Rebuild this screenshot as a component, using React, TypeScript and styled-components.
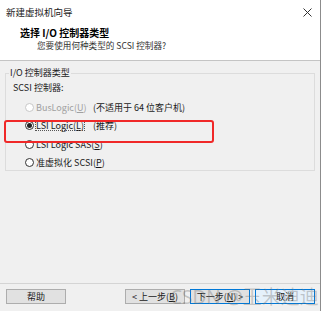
import styled, { createGlobalStyle } from 'styled-components'

const GlobalStyle = createGlobalStyle`
  html, body {
    margin: 0;
    padding: 0;
    background: #ffffff;
  }
  body {
    font-family: "Noto Sans CJK SC", "Noto Sans", sans-serif;
    font-size: 9px;
    color: #1a1a1a;
  }
`

const options = [
  { label: 'BusLogic', key: 'U', note: '(不适用于 64 位客户机)', disabled: true },
  { label: 'LSI Logic', key: 'L', note: '(推荐)', checked: true },
  { label: 'LSI Logic SAS', key: 'S' },
  { label: '准虚拟化 SCSI', key: 'P' },
]

export default function App() {
  return (
    <>
      <GlobalStyle />
      <Window>
        <TitleBar>
          <span>新建虚拟机向导</span>
          <svg width="9" height="9" viewBox="0 0 9 9">
            <path d="M0.5 0.5 L8.5 8.5 M8.5 0.5 L0.5 8.5" stroke="#333" strokeWidth="1" fill="none" />
          </svg>
        </TitleBar>
        <Header>
          <HeaderTitle>选择 I/O 控制器类型</HeaderTitle>
          <HeaderSub>您要使用何种类型的 SCSI 控制器?</HeaderSub>
        </Header>
        <Body>
          <GroupBox>
            <Legend>I/O 控制器类型</Legend>
            <GroupInner>
              <SubLabel>SCSI 控制器:</SubLabel>
              <RadioList>
                {options.map((o) => (
                  <RadioRow key={o.key} $disabled={o.disabled}>
                    <RadioCircle $checked={o.checked} $disabled={o.disabled} />
                    <RadioText $focused={o.checked}>
                      {o.label}(<u>{o.key}</u>)
                    </RadioText>
                    {o.note && <Note>{o.note}</Note>}
                  </RadioRow>
                ))}
              </RadioList>
            </GroupInner>
            <Highlight />
          </GroupBox>
        </Body>
        <Footer>
          <Button>帮助</Button>
          <ButtonGroup>
            <Button>&lt; 上一步(<u>B</u>)</Button>
            <Button $variant="default">下一步(<u>N</u>) &gt;</Button>
            <Button $variant="hover">取消</Button>
          </ButtonGroup>
          <Watermark>CSDN @玉米迪迪</Watermark>
        </Footer>
      </Window>
    </>
  )
}

const Window = styled.div`
  width: 320px;
  height: 311px;
  border-right: 1px solid #8c8c8c;
  display: flex;
  flex-direction: column;
  background: #f0f0f0;
  overflow: hidden;
`

const TitleBar = styled.div`
  height: 24px;
  background: #ffffff;
  display: flex;
  align-items: center;
  justify-content: space-between;
  padding: 0 8px 0 6px;
  font-size: 9.5px;
  color: #222;
`

const Header = styled.div`
  height: 37px;
  background: #ffffff;
  border-bottom: 1px solid #c4c4c4;
  padding: 3px 0 0 20px;
  box-sizing: border-box;
  display: flex;
  flex-direction: column;
`

const HeaderTitle = styled.div`
  font-weight: 700;
  font-size: 10px;
  line-height: 12px;
  color: #000;
`

const HeaderSub = styled.div`
  padding-left: 17px;
  font-size: 8.6px;
  line-height: 13px;
  color: #333;
`

const Body = styled.div`
  flex: 1;
  padding: 6px 5px 0 5px;
`

const GroupBox = styled.fieldset`
  position: relative;
  margin: 0;
  padding: 0;
  height: 104px;
  box-sizing: border-box;
  border: 1px solid #dcdcdc;
  min-width: 0;
`

const Legend = styled.legend`
  margin-left: 3px;
  padding: 0 1px;
  font-size: 9px;
  line-height: 12px;
  color: #222;
`

const GroupInner = styled.div`
  padding: 3px 0 0 7px;
`

const SubLabel = styled.div`
  font-size: 9px;
  line-height: 12px;
  color: #222;
`

const RadioList = styled.div`
  margin-top: 4px;
  padding-left: 12px;
  display: flex;
  flex-direction: column;
`

const RadioRow = styled.div<{ $disabled?: boolean }>`
  height: 18.5px;
  display: flex;
  align-items: center;
  color: ${(p) => (p.$disabled ? '#a0a0a0' : '#1a1a1a')};
`

const RadioCircle = styled.span<{ $checked?: boolean; $disabled?: boolean }>`
  width: 9px;
  height: 9px;
  box-sizing: border-box;
  border-radius: 50%;
  border: 1px solid ${(p) => (p.$disabled ? '#c8c8c8' : '#333')};
  background: #fff;
  display: flex;
  align-items: center;
  justify-content: center;
  &::after {
    content: '';
    display: ${(p) => (p.$checked ? 'block' : 'none')};
    width: 5px;
    height: 5px;
    border-radius: 50%;
    background: #222;
  }
`

const RadioText = styled.span<{ $focused?: boolean }>`
  margin-left: 1px;
  padding: 0 1px;
  line-height: 11px;
  white-space: nowrap;
  outline: ${(p) => (p.$focused ? '1px dotted #555' : 'none')};
  outline-offset: -1px;
`

const Note = styled.span`
  position: absolute;
  left: 87px;
  color: #1a1a1a;
  white-space: nowrap;
`

const Highlight = styled.div`
  position: absolute;
  left: -2px;
  top: 41px;
  width: 210px;
  height: 23px;
  border: 2px solid #f02828;
  border-radius: 3px;
  box-sizing: border-box;
  pointer-events: none;
`

const Footer = styled.div`
  position: relative;
  height: 28px;
  box-sizing: border-box;
  border-top: 1px solid #d4d4d4;
  padding: 5px 5px 0 6px;
  display: flex;
  justify-content: space-between;
  align-items: flex-start;
`

const ButtonGroup = styled.div`
  display: flex;
  gap: 5px;
`

const Button = styled.div<{ $variant?: 'default' | 'hover' }>`
  width: 60px;
  height: 15px;
  box-sizing: border-box;
  display: flex;
  align-items: center;
  justify-content: center;
  font-size: 9px;
  color: #1a1a1a;
  background: ${(p) => (p.$variant === 'hover' ? '#e5f1fb' : '#e1e1e1')};
  border: 1px solid ${(p) => (p.$variant ? '#0078d7' : '#adadad')};
`

const Watermark = styled.div`
  position: absolute;
  left: 170px;
  top: -2px;
  font-size: 19px;
  font-family: "Noto Sans", "Noto Sans CJK SC", sans-serif;
  color: rgba(110, 110, 110, 0.35);
  white-space: nowrap;
  pointer-events: none;
`
